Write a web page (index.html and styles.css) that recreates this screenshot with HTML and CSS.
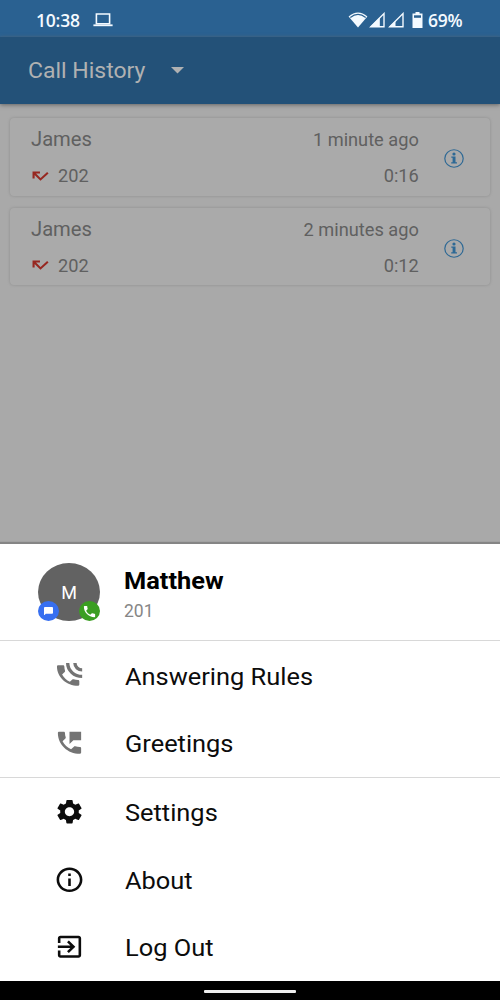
FILE: index.html
```html
<!DOCTYPE html>
<html lang="en">
<head>
<meta charset="utf-8">
<title>Call History</title>
<link rel="stylesheet" href="styles.css">
</head>
<body>
<div class="phone">
  <div class="status">
    <span class="clock">10:38</span>
    <svg class="laptop" viewBox="0 0 20 14"><path d="M3.4 1H16.6V10.8H3.4Z" fill="none" stroke="currentColor" stroke-width="1.6"/><path d="M.4 11.4H19.6V13.2H.4Z" fill="currentColor"/></svg>
    <div class="signals">
      <svg class="wifi" viewBox="0 0 20 16"><path d="M.6 4.400Q10-3.400 19.400 4.400L10 15.500Z" fill="currentColor"/><path d="M2.300 5.500Q10-.6 17.700 5.500" fill="none" stroke="#2a6191" stroke-width="1.200"/></svg>
      <svg class="cell" viewBox="0 0 16 16"><path d="M1.800 14.700L15 1.600V14.700Z" fill="none" stroke="currentColor" stroke-width="1.400"/><path d="M1 15L10.800 5.500V15Z" fill="currentColor"/></svg>
      <svg class="cell cell-weak" viewBox="0 0 16 16"><path d="M1.800 14.700L15 1.600V14.700Z" fill="none" stroke="currentColor" stroke-width="1.400"/><path d="M1 15L7.500 8.700V15Z" fill="currentColor"/></svg>
      <svg class="battery" viewBox="0 0 11 16"><path d="M3.500 0H7.500V1.500H10.500V16H.5V1.500H3.500Z" fill="currentColor"/><path d="M2 3.300H9V5.800H2Z" fill="#2a6191"/></svg>
      <span class="percent">69%</span>
    </div>
  </div>
  <div class="toolbar">
    <span class="title">Call History</span>
    <svg class="caret" viewBox="0 0 13 7"><path d="M0 0H13L6.5 6.6Z" fill="currentColor"/></svg>
  </div>
  <div class="history">
    <div class="card">
      <div class="caller">
        <span class="name">James</span>
        <div class="number"><svg class="missed" viewBox="0 0 16 10"><path d="M7.500 1.400H1.400V7.200M1.600 1.600L8 8L15 1.600" fill="none" stroke="currentColor" stroke-width="2"/></svg><span>202</span></div>
      </div>
      <div class="when"><span>1 minute ago</span><span>0:16</span></div>
      <svg class="info" viewBox="0 0 20 20" preserveAspectRatio="none"><circle cx="10" cy="10" r="9.200" fill="none" stroke="currentColor" stroke-width="1.200"/><circle cx="10" cy="5.200" r="1.600" fill="currentColor"/><path d="M7.300 7.800H11.500V14H13V15.300H7.200V14H8.600V9.100H7.300Z" fill="currentColor"/></svg>
    </div>
    <div class="card">
      <div class="caller">
        <span class="name">James</span>
        <div class="number"><svg class="missed" viewBox="0 0 16 10"><path d="M7.500 1.400H1.400V7.200M1.600 1.600L8 8L15 1.600" fill="none" stroke="currentColor" stroke-width="2"/></svg><span>202</span></div>
      </div>
      <div class="when"><span>2 minutes ago</span><span>0:12</span></div>
      <svg class="info" viewBox="0 0 20 20" preserveAspectRatio="none"><circle cx="10" cy="10" r="9.200" fill="none" stroke="currentColor" stroke-width="1.200"/><circle cx="10" cy="5.200" r="1.600" fill="currentColor"/><path d="M7.300 7.800H11.500V14H13V15.300H7.200V14H8.600V9.100H7.300Z" fill="currentColor"/></svg>
    </div>
  </div>
  <div class="sheet">
    <div class="profile">
      <div class="avatar">M
        <span class="badge chat"><svg viewBox="2 2 20 20" preserveAspectRatio="none"><path d="M20 2H4c-1.100 0-2 .9-2 2v18l4-4h14c1.100 0 2-.9 2-2V4c0-1.100-.9-2-2-2z" fill="currentColor"/></svg></span>
        <span class="badge call"><svg viewBox="0 0 24 24"><path d="M20 15.500c-1.250 0-2.450-.2-3.570-.57-.35-.11-.74-.03-1.020.24l-2.200 2.200c-2.830-1.440-5.150-3.750-6.590-6.580l2.200-2.210c.28-.27.36-.66.25-1.010C8.700 6.450 8.500 5.250 8.500 4c0-.55-.45-1-1-1H4c-.55 0-1 .45-1 1 0 9.390 7.610 17 17 17 .55 0 1-.45 1-1v-3.500c0-.55-.45-1-1-1z" fill="currentColor"/></svg></span>
      </div>
      <div class="identity"><span class="user">Matthew</span><span class="extension">201</span></div>
    </div>
    <div class="group">
      <div class="item muted">
        <svg viewBox="0 0 24 24" preserveAspectRatio="none"><path d="M18.600 16.200c-1.200 0-2.350-.2-3.400-.55-.35-.11-.74-.03-1.020.24l-1.900 1.900c-2.600-1.400-4.600-3.400-6-6l2-2.110c.28-.27.36-.66.25-1.010C8.200 7.600 8 6.450 8 5.300c0-.55-.45-1-1-1H3.300c-.55 0-1 .45-1 1C2.300 14 9.700 21 18.600 21c.55 0 1-.45 1-1v-2.800c0-.55-.45-1-1-1z" fill="currentColor"/><path d="M10.600 2.500C10.600 8.600 15.700 13.400 21.800 13.400M16.200 2.500C16.200 5.700 18.800 8.100 21.800 8.100" fill="none" stroke="currentColor" stroke-width="2.600"/></svg>
        <span>Answering Rules</span>
      </div>
      <div class="item muted">
        <svg viewBox="0 0 24 24" preserveAspectRatio="none"><path d="M20 15.500c-1.250 0-2.450-.2-3.570-.57-.35-.11-.74-.03-1.020.24l-2.200 2.200c-2.830-1.440-5.150-3.750-6.590-6.580l2.200-2.210c.28-.27.36-.66.25-1.010C8.700 6.450 8.500 5.250 8.500 4c0-.55-.45-1-1-1H4c-.55 0-1 .45-1 1 0 9.390 7.610 17 17 17 .55 0 1-.45 1-1v-3.500c0-.55-.45-1-1-1zM12 3v10l3-3h6V3h-9z" fill="currentColor"/></svg>
        <span>Greetings</span>
      </div>
    </div>
    <div class="group">
      <div class="item">
        <svg viewBox="0 0 24 24" preserveAspectRatio="none"><path d="M19.140 12.940c.04-.3.060-.61.060-.94 0-.32-.02-.64-.07-.94l2.030-1.580c.18-.14.23-.41.12-.61l-1.920-3.320c-.12-.22-.37-.29-.59-.22l-2.390.96c-.5-.38-1.030-.7-1.620-.94l-.36-2.540c-.04-.24-.24-.41-.48-.41h-3.840c-.24 0-.43.17-.47.41l-.36 2.540c-.59.24-1.130.57-1.620.94l-2.390-.96c-.22-.08-.47 0-.59.22L2.740 8.870c-.12.21-.08.47.12.61l2.030 1.580c-.05.3-.09.63-.09.94s.02.64.07.94l-2.030 1.580c-.18.14-.23.41-.12.61l1.920 3.320c.12.22.37.29.59.22l2.390-.96c.5.38 1.030.7 1.620.94l.36 2.540c.05.24.24.41.48.41h3.840c.24 0 .44-.17.47-.41l.36-2.540c.59-.24 1.130-.56 1.620-.94l2.390.96c.22.08.47 0 .59-.22l1.920-3.320c.12-.22.07-.47-.12-.61l-2.010-1.580zM12 15.600c-1.980 0-3.600-1.620-3.600-3.600s1.620-3.600 3.600-3.600 3.600 1.620 3.600 3.600-1.620 3.600-3.600 3.600z" fill="currentColor"/></svg>
        <span>Settings</span>
      </div>
      <div class="item">
        <svg viewBox="0 0 24 24" preserveAspectRatio="none"><path d="M11 7h2v2h-2zm0 4h2v6h-2zm1-9C6.480 2 2 6.480 2 12s4.480 10 10 10 10-4.480 10-10S17.520 2 12 2zm0 18c-4.410 0-8-3.590-8-8s3.590-8 8-8 8 3.590 8 8-3.590 8-8 8z" fill="currentColor"/></svg>
        <span>About</span>
      </div>
      <div class="item">
        <svg viewBox="0 0 24 24" preserveAspectRatio="none"><path d="M10.090 15.590L11.500 17l5-5-5-5-1.410 1.410L12.670 11H3v2h9.670l-2.580 2.590zM19 3H5c-1.110 0-2 .9-2 2v4h2V5h14v14H5v-4H3v4c0 1.100.89 2 2 2h14c1.100 0 2-.9 2-2V5c0-1.100-.9-2-2-2z" fill="currentColor"/></svg>
        <span>Log Out</span>
      </div>
    </div>
  </div>
  <div class="navbar"><div class="handle"></div></div>
</div>
</body>
</html>
```
FILE: styles.css
```css
* { box-sizing: border-box; }
body { margin: 0; font-family: Roboto, "Liberation Sans", sans-serif; }
svg { display: block; flex: none; }
.phone { width: 500px; height: 1000px; display: flex; flex-direction: column; overflow: hidden; background: #a9a9a9; }
.status { height: 37px; flex: none; display: flex; align-items: center; padding: 2px 36px 0; background: #2a6191; color: #f4faff; }
.clock, .percent { font: 600 17.500px/20px "Open Sans", sans-serif; letter-spacing: -.2px; }
.clock { width: 44px; white-space: nowrap; }
.laptop { width: 20px; height: 14px; margin-left: 13px; }
.signals { margin-left: auto; display: flex; align-items: center; }
.wifi { width: 20px; height: 16px; }
.cell { width: 16px; height: 16px; margin-left: 1px; }
.cell-weak { margin-left: 3px; }
.battery { width: 11px; height: 16px; margin-left: 8px; }
.percent { width: 36px; margin-left: 5px; white-space: nowrap; }
.toolbar { height: 67px; flex: none; display: flex; align-items: center; padding-left: 28px; background: #235178; color: #b0b1b2; box-shadow: 0 1px 4px #666; }
.title { width: 119px; font-size: 22px; line-height: 28px; white-space: nowrap; transform: scaleX(1.045); transform-origin: left; }
.caret { width: 13px; height: 7px; margin-left: 24px; }
.history { height: 437px; flex: none; display: flex; flex-direction: column; gap: 12px; padding: 14px 10px 0; }
.card { height: 77.500px; flex: none; display: flex; padding: 9px 26px 0 20.500px; border-radius: 4px; background: #aaa; box-shadow: 0 0 3px #8c8c8c; color: #606060; font-size: 17.500px; line-height: 26px; }
.caller, .when { display: flex; flex-direction: column; gap: 10px; }
.name { font-size: 19.500px; transform: scaleX(1.035); transform-origin: left; }
.number { display: flex; align-items: center; gap: 9px; }
.number span { transform: scaleX(1.04); transform-origin: left; }
.missed { width: 17px; height: 10.500px; margin-left: 1px; color: #972720; }
.when { margin-left: auto; align-items: flex-end; }
.when span { transform: scaleX(1.04); transform-origin: right; }
.info { width: 20px; height: 19px; margin: 22px 0 0 25.500px; color: #2e6995; }
.sheet { height: 437px; flex: none; margin-top: 3px; background: #fff; box-shadow: 0 -2px 1px #858585; }
.profile { height: 96.400px; display: flex; padding: 19px 38px 0; gap: 24px; }
.avatar { position: relative; width: 62px; height: 58px; border-radius: 50%; background: #626262; color: #fff; font-size: 18px; line-height: 60px; text-align: center; }
.badge { position: absolute; bottom: 0; width: 21px; height: 20px; border-radius: 50%; display: flex; align-items: center; justify-content: center; }
.chat { left: 0; background: #376ff0; }
.chat svg { width: 9px; height: 8.500px; }
.call { right: 0; background: #3b9e22; }
.call svg { width: 15px; height: 15px; }
.identity { display: flex; flex-direction: column; }
.user { font-size: 24.200px; line-height: 30px; font-weight: 700; padding-top: 3px; color: #000; transform: scaleX(1.05); transform-origin: left; }
.extension { font-size: 17.500px; line-height: 24px; margin-top: 3px; color: #868686; }
.group { border-top: 1px solid #d8d8d8; }
.item { height: 67.700px; display: flex; align-items: center; padding-left: 53.500px; gap: 40px; color: #0c0c0c; }
.item svg { width: 31px; height: 29.500px; }
.item span { font-size: 24.200px; line-height: 30px; padding-top: 3px; color: #0c0c0c; transform: scaleX(1.05); transform-origin: left; }
.item.muted { color: #747474; }
.navbar { height: 19px; flex: none; display: flex; justify-content: center; padding-top: 9px; background: #000; }
.handle { width: 92px; height: 3px; border-radius: 1px; background: #eee; }
```
